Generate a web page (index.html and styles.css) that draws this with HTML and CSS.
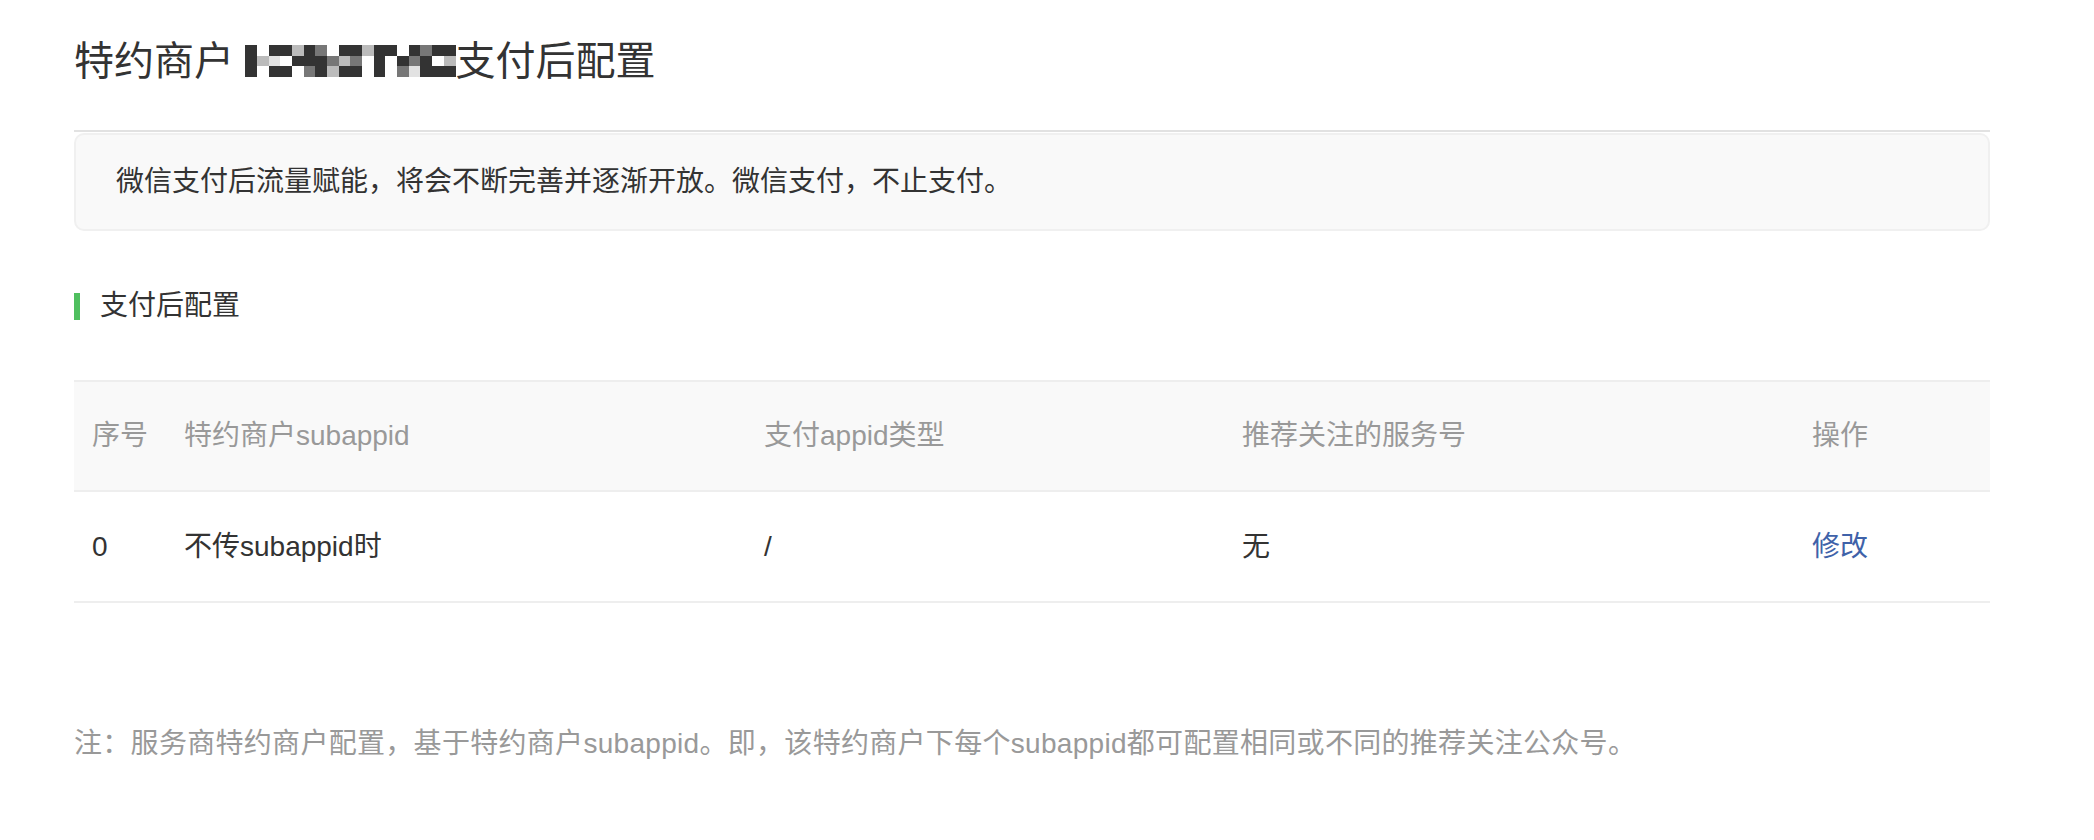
FILE: index.html
```html
<!DOCTYPE html>
<html lang="zh-CN">
<head>
    <meta charset="UTF-8">
    <meta name="viewport" content="width=device-width, initial-scale=1.0">
    <title>支付后配置</title>
    <link rel="stylesheet" href="styles.css">
</head>
<body>
<div class="page">
    <h2 class="page-title">特约商户 <span class="mosaic">
        <i class="d"></i><i class="w"></i><i class="d"></i><i class="d"></i><i class="l"></i><i class="d"></i><i class="m"></i><i class="w"></i><i class="d"></i><i class="d"></i><i class="l"></i><i class="d"></i><i class="d"></i><i class="w"></i><i class="d"></i><i class="m"></i><i class="d"></i><i class="d"></i>
        <i class="d"></i><i class="l"></i><i class="x"></i><i class="w"></i><i class="d"></i><i class="d"></i><i class="d"></i><i class="m"></i><i class="l"></i><i class="m"></i><i class="w"></i><i class="d"></i><i class="w"></i><i class="d"></i><i class="m"></i><i class="d"></i><i class="w"></i><i class="l"></i>
        <i class="d"></i><i class="w"></i><i class="d"></i><i class="d"></i><i class="w"></i><i class="m"></i><i class="d"></i><i class="l"></i><i class="d"></i><i class="d"></i><i class="w"></i><i class="d"></i><i class="w"></i><i class="m"></i><i class="x"></i><i class="d"></i><i class="d"></i><i class="d"></i>
    </span>支付后配置</h2>

    <div class="notice-wrap">
        <div class="notice">微信支付后流量赋能，将会不断完善并逐渐开放。微信支付，不止支付。</div>
    </div>

    <div class="section-title">支付后配置</div>

    <table class="config-table">
        <colgroup>
            <col class="c1">
            <col class="c2">
            <col class="c3">
            <col class="c4">
            <col class="c5">
        </colgroup>
        <thead>
            <tr>
                <th>序号</th>
                <th>特约商户subappid</th>
                <th>支付appid类型</th>
                <th>推荐关注的服务号</th>
                <th>操作</th>
            </tr>
        </thead>
        <tbody>
            <tr>
                <td>0</td>
                <td>不传subappid时</td>
                <td>/</td>
                <td>无</td>
                <td><a href="#" class="edit-link">修改</a></td>
            </tr>
        </tbody>
    </table>

    <p class="tips">注：服务商特约商户配置，基于特约商户subappid。即，该特约商户下每个subappid都可配置相同或不同的推荐关注公众号。</p>
</div>
</body>
</html>
```

FILE: styles.css
```css
body {
    margin: 0;
    font-family: "Liberation Sans", "Noto Sans CJK SC", sans-serif;
    color: #333;
    background-color: #fff;
}
.page {
    padding: 33px 104px 40px 74px;
}
.page-title {
    margin: 0;
    height: 56px;
    font-size: 40px;
    font-weight: normal;
    line-height: 56px;
    color: #333;
}
.mosaic {
    display: inline-grid;
    grid-template-columns: repeat(18, 11.7px);
    grid-template-rows: repeat(3, 10.5px);
    vertical-align: top;
    margin-top: 12px;
}
.mosaic i {
    display: block;
}
.mosaic .d { background-color: #333; }
.mosaic .m { background-color: #777; }
.mosaic .l { background-color: #bbb; }
.mosaic .x { background-color: #e2e2e2; }
.mosaic .w { background-color: #fff; }

.notice-wrap {
    margin-top: 41px;
    border-top: 2px solid #e2e2e2;
    padding-top: 1px;
}
.notice {
    border: 2px solid #f0f0f0;
    border-radius: 10px;
    background-color: #f9f9f9;
    padding: 27px 40px;
    font-size: 28px;
    line-height: 40px;
    color: #333;
}
.section-title {
    display: flex;
    align-items: center;
    margin-top: 55px;
    font-size: 28px;
    line-height: 40px;
    color: #333;
}
.section-title::before {
    content: "";
    width: 6px;
    height: 27px;
    margin-right: 20px;
    background-color: #4fbf5f;
}
.config-table {
    width: 100%;
    margin-top: 54px;
    border-collapse: collapse;
    table-layout: fixed;
}
.config-table .c1 { width: 92px; }
.config-table .c2 { width: 580px; }
.config-table .c3 { width: 478px; }
.config-table .c4 { width: 570px; }
.config-table th,
.config-table td {
    padding: 0 0 0 18px;
    font-size: 28px;
    line-height: 40px;
    text-align: left;
    font-weight: normal;
}
.config-table th {
    height: 108px;
    color: #999;
    background-color: #f9f9f9;
    border-top: 2px solid #eee;
    border-bottom: 2px solid #eee;
}
.config-table td {
    height: 109px;
    color: #333;
    border-bottom: 2px solid #eee;
}
.edit-link {
    color: #3f62a9;
    text-decoration: none;
}
.tips {
    margin: 121px 0 0;
    font-size: 28px;
    line-height: 40px;
    letter-spacing: 0.3px;
    color: #999;
}
```
